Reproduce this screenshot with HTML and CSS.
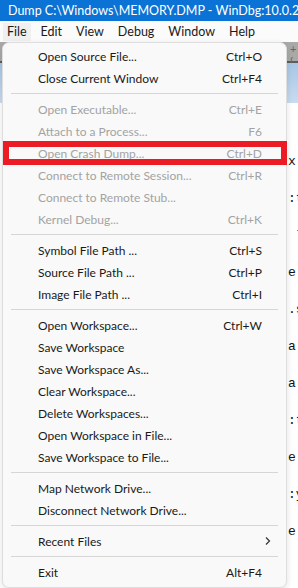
FILE: index.html
```html
<!DOCTYPE html>
<html lang="en">
<head>
    <meta charset="UTF-8">
    <meta name="viewport" content="width=device-width, initial-scale=1.0">
    <title>WinDbg</title>
    <link rel="stylesheet" href="styles.css">
</head>
<body>
<div class="window">
    <div class="titlebar">
        <svg class="app-icon" width="16" height="16" viewBox="0 0 16 16">
            <rect x="3" y="1" width="12" height="10" fill="#9aa3ab" stroke="#4f565c" stroke-width="1"/>
            <rect x="5" y="3" width="8" height="6" fill="#2b3640"/>
            <rect x="7" y="11" width="4" height="2" fill="#6d757c"/>
            <rect x="5" y="13" width="9" height="1.5" fill="#6d757c"/>
            <circle cx="5" cy="9" r="3.6" fill="#3ec6e8" stroke="#1b6f99" stroke-width="1"/>
            <circle cx="4.2" cy="8.2" r="1.2" fill="#bff1ff"/>
            <line x1="2.5" y1="11.5" x2="0.8" y2="14.5" stroke="#2d3b46" stroke-width="1.6"/>
        </svg>
        <span class="title">Dump C:\Windows\MEMORY.DMP - WinDbg:10.0.26100.1</span>
    </div>

    <div class="menubar">
        <span class="menubar-item active">File</span>
        <span class="menubar-item">Edit</span>
        <span class="menubar-item">View</span>
        <span class="menubar-item">Debug</span>
        <span class="menubar-item">Window</span>
        <span class="menubar-item">Help</span>
    </div>

    <div class="workarea">
        <div class="toolstrip"><span>+{</span></div>
        <div class="bluestrip"></div>
        <div class="command-text">
            <div>x</div>
            <div>:t</div>
            <div>&nbsp;l</div>
            <div>e</div>
            <div>.s</div>
            <div>a</div>
            <div>a</div>
            <div>:t</div>
            <div>e</div>
            <div>:y</div>
            <div>e</div>
        </div>
    </div>

    <div class="dropdown">
        <div class="item"><span>Open Source File...</span><span>Ctrl+O</span></div>
        <div class="item"><span>Close Current Window</span><span>Ctrl+F4</span></div>
        <div class="sep"></div>
        <div class="item disabled"><span>Open Executable...</span><span>Ctrl+E</span></div>
        <div class="item disabled"><span>Attach to a Process...</span><span>F6</span></div>
        <div class="item disabled"><span>Open Crash Dump...</span><span>Ctrl+D</span></div>
        <div class="item disabled"><span>Connect to Remote Session...</span><span>Ctrl+R</span></div>
        <div class="item disabled"><span>Connect to Remote Stub...</span><span></span></div>
        <div class="item disabled"><span>Kernel Debug...</span><span>Ctrl+K</span></div>
        <div class="sep"></div>
        <div class="item"><span>Symbol File Path ...</span><span>Ctrl+S</span></div>
        <div class="item"><span>Source File Path ...</span><span>Ctrl+P</span></div>
        <div class="item"><span>Image File Path ...</span><span>Ctrl+I</span></div>
        <div class="sep"></div>
        <div class="item"><span>Open Workspace...</span><span>Ctrl+W</span></div>
        <div class="item"><span>Save Workspace</span><span></span></div>
        <div class="item"><span>Save Workspace As...</span><span></span></div>
        <div class="item"><span>Clear Workspace...</span><span></span></div>
        <div class="item"><span>Delete Workspaces...</span><span></span></div>
        <div class="item"><span>Open Workspace in File...</span><span></span></div>
        <div class="item"><span>Save Workspace to File...</span><span></span></div>
        <div class="sep"></div>
        <div class="item"><span>Map Network Drive...</span><span></span></div>
        <div class="item"><span>Disconnect Network Drive...</span><span></span></div>
        <div class="sep"></div>
        <div class="item"><span>Recent Files</span><span class="arrow">
            <svg width="8" height="10" viewBox="0 0 8 10"><path d="M2 1.5 L5.5 5 L2 8.5" fill="none" stroke="#333" stroke-width="1.2"/></svg>
        </span></div>
        <div class="sep"></div>
        <div class="item"><span>Exit</span><span>Alt+F4</span></div>

        <div class="highlight"></div>
    </div>
</div>
</body>
</html>
```

FILE: styles.css
```css
body {
    margin: 0;
    font-family: 'Lato', 'Noto Sans', sans-serif;
    font-size: 12px;
    color: #1a1a1a;
    overflow: hidden;
}

.window {
    position: relative;
    width: 298px;
    height: 588px;
    display: flex;
    flex-direction: column;
    background: #fff;
    overflow: hidden;
}

.titlebar {
    height: 21px;
    background: #0a73d5;
    color: #fff;
    display: flex;
    align-items: center;
    padding-left: 3px;
    gap: 5px;
    white-space: nowrap;
    flex-shrink: 0;
}

.title {
    font-size: 12.5px;
}

.menubar {
    height: 21px;
    display: flex;
    align-items: center;
    padding-left: 3px;
    background: #fbfbfb;
    flex-shrink: 0;
}

.menubar-item {
    padding: 0 4px;
    margin-right: 6px;
    line-height: 18px;
    font-size: 12.5px;
}

.menubar-item.active {
    background: #f0f0f0;
}

.workarea {
    flex: 1;
    display: flex;
    flex-direction: column;
}

.toolstrip {
    height: 19px;
    background: #a9a9a9;
    border-bottom: 2px solid #5d5d5d;
    padding-left: 290px;
    color: #666;
    font-size: 11px;
}

.bluestrip {
    height: 40px;
    background: linear-gradient(#a7c6e6, #c9dcf0);
}

.command-text {
    padding-left: 288px;
    padding-top: 40px;
    font-family: 'Liberation Mono', monospace;
    font-size: 13px;
    line-height: 37px;
    color: #111;
    white-space: nowrap;
}

.dropdown {
    position: absolute;
    top: 42px;
    left: 2px;
    width: 283px;
    padding: 2px 0 4px;
    background: #f9f9f9;
    border: 1px solid #dedede;
    border-radius: 7px;
    box-shadow: 0 2px 6px rgba(0, 0, 0, 0.12);
}

.item {
    height: 22px;
    display: flex;
    justify-content: space-between;
    align-items: center;
    padding: 0 24px 0 35px;
}

.item.disabled {
    color: #a3a3a3;
}

.arrow {
    margin-right: -10px;
    display: flex;
}

.sep {
    height: 1px;
    margin: 4px 8px;
    background: #d6d6d6;
}

.highlight {
    position: absolute;
    top: 98px;
    left: 0;
    width: 272px;
    height: 12px;
    border: 6px solid #ec1c24;
}
```
